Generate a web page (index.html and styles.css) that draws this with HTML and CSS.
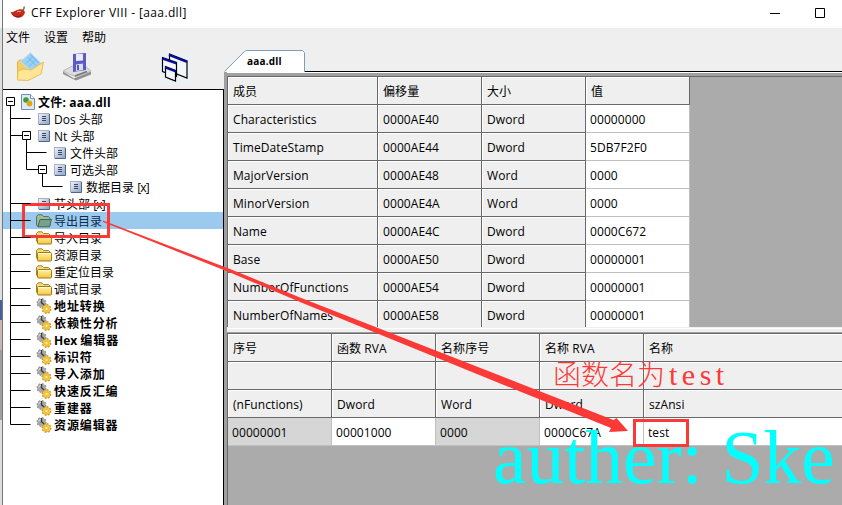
FILE: index.html
```html
<!DOCTYPE html>
<html lang="zh-CN">
<head>
<meta charset="utf-8">
<title>CFF Explorer VIII - [aaa.dll]</title>
<link rel="stylesheet" href="styles.css">
</head>
<body>
<svg class="defs" width="0" height="0" aria-hidden="true">
  <defs>
    <linearGradient id="gDoc" x1="0" y1="0" x2="1" y2="1"><stop offset="0" stop-color="#f4f7fb"/><stop offset="1" stop-color="#8fa3c0"/></linearGradient>
    <linearGradient id="gFold" x1="0" y1="0" x2="0" y2="1"><stop offset="0" stop-color="#fff3a8"/><stop offset="1" stop-color="#f3c63c"/></linearGradient>
    <symbol id="doc" viewBox="0 0 12 12"><rect x=".5" y=".5" width="10.5" height="10.5" fill="url(#gDoc)" stroke="#a3b0c6"/><path d="M11.5 1v10.5H1" fill="none" stroke="#52658c"/><path d="M4 3.500h4M4 5.500h4M4 7.500h4" stroke="#35496f"/></symbol>
    <symbol id="folder" viewBox="0 0 16 14"><path d="M.5 10.500V2.500L2 .8h4l1.500 1.700H12.500L14 4v1.500" fill="#f6dc7c" stroke="#a98322"/><rect x="1.500" y="4.500" width="14" height="8.500" rx="1" fill="url(#gFold)" stroke="#a07a1c"/><path d="M2.500 5.500h12" stroke="#fffbd0"/></symbol>
    <symbol id="folder-open" viewBox="0 0 16 14"><path d="M.5 11V2.500L2 .8h4l1.500 1.700H12.500L14 4v8H1.500z" fill="#9dbba0" stroke="#55755a"/><path d="M4 5.500h11.500L13.500 12.800H1.800z" fill="#76a18e" stroke="#47664c"/></symbol>
    <symbol id="gears" viewBox="0 0 16 16"><circle cx="5.500" cy="5" r="4" fill="#999" stroke="#8a8a8a" stroke-width="2" stroke-dasharray="1.600 1.500"/><circle cx="5.500" cy="5" r="4" fill="#a8a8a8"/><path d="M2.500 4L5 2" stroke="#eee"/><path d="M5.500 1v4.500M6 5l4 4" stroke="#3a3a3a" stroke-width="1.300"/><circle cx="10.500" cy="11" r="3.900" fill="#e8b52b" stroke="#c08c18" stroke-width="2" stroke-dasharray="1.600 1.400"/><circle cx="10.500" cy="11" r="3.800" fill="#f0c341"/><circle cx="10.500" cy="11" r="1" fill="#fff6d0"/></symbol>
  </defs>
</svg>
<div class="screen">
  <div class="behind"></div>
  <div class="window">
    <header class="titlebar">
      <svg class="chili" width="16" height="14" viewBox="0 0 16 14"><path d="M.5 5.500C2 7 4 5.500 6 4.500S11 2.500 13.500 4s1.500 5-2 7S2 11 .5 5.500z" fill="#c52a1b"/><path d="M2.500 8.500c2 2.500 6 3 9 1" stroke="#8a1710" fill="none"/><path d="M7 6c1-1 3-1 4 0" stroke="#f4a598" fill="none"/><path d="M12.500 4c1.500-.5 2-1.500 1.500-3.500" stroke="#56733a" fill="none" stroke-width="1.300"/></svg>
      <span class="title">CFF Explorer VIII - [aaa.dll]</span>
      <svg class="winbtns" width="60" height="12" viewBox="0 0 60 12"><path d="M0 6.500h10M45.500 1.500h9v9h-9z" fill="none" stroke="#000"/></svg>
    </header>
    <div class="main">
      <aside class="left">
        <nav class="menu"><span>文件</span><span>设置</span><span>帮助</span></nav>
        <div class="toolbar">
          <svg width="30" height="30" viewBox="0 0 30 30"><path d="M2.500 27V10l2-2h5l2 3 14 1v8L9 28z" fill="#f6cf63" stroke="#e6b44a"/><path d="M15.500 .5L26 11l-9 9L5.500 9.500z" fill="#9bd1f5" stroke="#c4e2f6"/><path d="M15.500 3l8 8M13 5.500l8 8M18 4.500l-7 7M21 7.500l-7 7" fill="none" stroke="#69b6ec"/><path d="M2.500 28l.5-9 5-2 8 1 12.500-8-2.500 12-13 6.500z" fill="#ffe596" stroke="#ecbd52"/></svg>
          <svg width="30" height="30" viewBox="0 0 30 30"><path d="M1 19.500l11 7 17-7v3l-15 6L1 22z" fill="#8f8f8f"/><path d="M1 19l9-5h13l6 5-15 6z" fill="#ddd" stroke="#b9b9b9"/><path d="M13 24l12-4.500" stroke="#777" stroke-width="1.500"/><path d="M11 2l13-1v17l-13 2z" fill="#5d5bc0"/><path d="M14 2h7v6.500l-7 .5z" fill="#e9ebf9"/><path d="M14 12.500l7-1v6.500l-7 1z" fill="#d9ddf2"/><path d="M15 13h2v5h-2z" fill="#5957bb"/></svg>
          <svg class="cascade" width="32" height="32" viewBox="0 0 32 32"><path d="M0 0h32v32H0z" fill="#ecf1f6"/><g fill="#f4f7fa" stroke="#000" stroke-width="1.200"><path d="M10.500 2l17.500 7v17l-17.500-7z"/><path d="M3.500 5.500l14 5v14l-14-5z"/><path d="M6.500 14.500l10 4v10.500l-10-4z"/></g><path d="M10 3l18 7M3 6.500l14.500 5M6 15.500l11 4" stroke="#0a0aa5" stroke-width="2"/></svg>
        </div>
        <div class="tree">
          <svg class="lines" width="70" height="340" viewBox="0 0 70 340"><g fill="none" stroke="#000"><path d="M7.500 16V334.500M7.500 28.500h20M7.500 45.500h12M7.500 113.500h20M7.500 130.500h20M7.500 147.500h20M7.500 164.500h20M7.500 181.500h20M7.500 198.500h20M7.500 215.500h20M7.500 232.500h20M7.500 249.500h20M7.500 266.500h20M7.500 283.500h20M7.500 300.500h20M7.500 317.500h20M7.500 334.500h20M23.500 50v29.500h12M23.500 62.500h20M39.500 84v12.500h20"/></g><g fill="#fff" stroke="#000"><path d="M3.500 7.500h8v8h-8zM19.500 41.500h8v8h-8zM35.500 75.500h8v8h-8z"/><path d="M5 11.500h5M21 45.500h5M37 79.500h5"/></g></svg>
          <div class="node root b"><svg width="14" height="16" viewBox="0 0 14 16"><path d="M.5.500h9l4 4v11H.5z" fill="#dce9f8" stroke="#6f8fb5"/><path d="M9.500.500v4h4" fill="#fff" stroke="#6f8fb5"/><circle cx="5" cy="6" r="2.800" fill="#3f9b3a"/><circle cx="8.500" cy="9.500" r="2.900" fill="#dea71c"/></svg><span>文件: <i>aaa.dll</i></span></div>
          <div class="node d1"><svg class="doc"><use href="#doc"/></svg><span>Dos 头部</span></div>
          <div class="node d1"><svg class="doc"><use href="#doc"/></svg><span>Nt 头部</span></div>
          <div class="node d2"><svg class="doc"><use href="#doc"/></svg><span>文件头部</span></div>
          <div class="node d2"><svg class="doc"><use href="#doc"/></svg><span>可选头部</span></div>
          <div class="node d3"><svg class="doc"><use href="#doc"/></svg><span>数据目录 <i class="x">[x]</i></span></div>
          <div class="node d1"><svg class="doc"><use href="#doc"/></svg><span>节头部 <i class="x">[x]</i></span></div>
          <div class="node f sel"><svg class="fold"><use href="#folder-open"/></svg><span>导出目录</span></div>
          <div class="node f"><svg class="fold"><use href="#folder"/></svg><span>导入目录</span></div>
          <div class="node f"><svg class="fold"><use href="#folder"/></svg><span>资源目录</span></div>
          <div class="node f"><svg class="fold"><use href="#folder"/></svg><span>重定位目录</span></div>
          <div class="node f"><svg class="fold"><use href="#folder"/></svg><span>调试目录</span></div>
          <div class="node f b"><svg class="gear"><use href="#gears"/></svg><span>地址转换</span></div>
          <div class="node f b"><svg class="gear"><use href="#gears"/></svg><span>依赖性分析</span></div>
          <div class="node f b"><svg class="gear"><use href="#gears"/></svg><span><i class="hex">Hex </i>编辑器</span></div>
          <div class="node f b"><svg class="gear"><use href="#gears"/></svg><span>标识符</span></div>
          <div class="node f b"><svg class="gear"><use href="#gears"/></svg><span>导入添加</span></div>
          <div class="node f b"><svg class="gear"><use href="#gears"/></svg><span>快速反汇编</span></div>
          <div class="node f b"><svg class="gear"><use href="#gears"/></svg><span>重建器</span></div>
          <div class="node f b"><svg class="gear"><use href="#gears"/></svg><span>资源编辑器</span></div>
        </div>
      </aside>
      <section class="right">
        <div class="tabs"><div class="tab"><svg class="tabshape" width="82" height="22" viewBox="0 0 82 22"><path d="M.5 21.500L20.500 1.500q1-1 2-1H78.500l2 2V22" fill="#fff" stroke="#7f9db9"/></svg><span>aaa.dll</span></div><div class="tabline"></div></div>
        <div class="panes">
          <div class="grid top">
            <div>成员</div><div>偏移量</div><div>大小</div><div>值</div>
            <div>Characteristics</div><div>0000AE40</div><div>Dword</div><div class="v">00000000</div>
            <div>TimeDateStamp</div><div>0000AE44</div><div>Dword</div><div class="v">5DB7F2F0</div>
            <div>MajorVersion</div><div>0000AE48</div><div>Word</div><div class="v">0000</div>
            <div>MinorVersion</div><div>0000AE4A</div><div>Word</div><div class="v">0000</div>
            <div>Name</div><div>0000AE4C</div><div>Dword</div><div class="v">0000C672</div>
            <div>Base</div><div>0000AE50</div><div>Dword</div><div class="v">00000001</div>
            <div>NumberOfFunctions</div><div>0000AE54</div><div>Dword</div><div class="v">00000001</div>
            <div>NumberOfNames</div><div>0000AE58</div><div>Dword</div><div class="v">00000001</div>
          </div>
          <div class="splitter"></div>
          <div class="grid bottom">
            <div>序号</div><div>函数 RVA</div><div>名称序号</div><div>名称 RVA</div><div>名称</div>
            <div></div><div></div><div></div><div></div><div></div>
            <div>(nFunctions)</div><div>Dword</div><div>Word</div><div>Dword</div><div>szAnsi</div>
            <div class="v g">00000001</div><div class="v">00001000</div><div class="v g">0000</div><div class="v">0000C67A</div><div class="v">test</div>
          </div>
        </div>
      </section>
    </div>
  </div>
  <svg class="marks" width="842" height="505" viewBox="0 0 842 505">
    <g fill="none" stroke="#fb3a37" stroke-width="3"><path d="M23.500 204.500h85v32h-85z"/><path d="M634.500 420.500h53v25h-53z"/></g>
    <path d="M103 220.500L230 269 300 297.500 520 383.500 613.500 420 616.500 418 628 431 609 432 611 428 520 391.500 300 302 230 272.500 103 222z" fill="#fb3a37"/>
  </svg>
  <div class="note">函数名为<span>test</span></div>
  <div class="author">auther: Ske</div>
</div>
</body>
</html>
```
FILE: styles.css
```css
* { box-sizing: border-box; }
body { margin: 0; font: 12px/16px "Open Sans", "Noto Sans CJK SC", sans-serif; color: #000; }
.defs { position: absolute; }
.screen { position: relative; width: 842px; height: 505px; overflow: hidden; display: flex; background: #efefef; }
.behind { width: 2px; background: linear-gradient(#f4f4f4 0 28px, #dedede 28px 300px, #46629a 300px 320px, #c9b5b5 320px 350px, #a0a0a0 350px 420px, #ddd 420px); }
.window { flex: 1; min-width: 0; display: flex; flex-direction: column; border-left: 1px solid #777; }
.titlebar { height: 28px; background: #fff; display: flex; align-items: center; padding: 0 12px 3px 7px; }
.title { margin-left: 5px; flex: 1; letter-spacing: .37px; }
.main { flex: 1; min-height: 0; display: flex; }
.left { width: 221px; display: flex; flex-direction: column; flex: none; }
.menu { height: 20px; display: flex; gap: 14px; padding: 2px 3px; }
.toolbar { height: 41px; display: flex; gap: 17px; padding: 4px 0 0 12px; flex: none; }
.cascade { margin-left: 50px; }
.tree { position: relative; flex: 1; border: solid #000; border-width: 1px 1px 0 0; padding-top: 3px; background: #fff; }
.lines { position: absolute; left: 0; top: 0; z-index: 1; }
.node { height: 17px; display: flex; align-items: center; white-space: nowrap; line-height: 17px; }
.node svg { flex: none; }
.node span { position: relative; top: 1px; }
.node i { font-style: normal; }
.b { font-weight: 700; letter-spacing: .9px; }
.root { padding-left: 18px; gap: 3px; letter-spacing: .2px; }
.x { letter-spacing: -.8px; }
.hex { letter-spacing: 0; }
.d1 { padding-left: 35px; gap: 4px; }
.d2 { padding-left: 51px; gap: 4px; }
.d3 { padding-left: 67px; gap: 4px; }
.f { padding-left: 33px; gap: 2px; }
.sel { background: #9ccaef; color: #0c2d4a; }
.doc { width: 12px; height: 12px; }
.fold { width: 16px; height: 14px; }
.gear { width: 16px; height: 16px; }
.right { flex: 1; min-width: 0; display: flex; flex-direction: column; }
.tabs { height: 44px; display: flex; align-items: flex-end; flex: none; }
.tab { position: relative; width: 81px; height: 22px; flex: none; font-size: 10px; font-weight: 700; line-height: 22px; padding-left: 23px; letter-spacing: .2px; }
.tabshape { position: absolute; left: 0; top: 0; }
.tab span { position: relative; }
.tabline { flex: 1; height: 1px; background: #000; }
.panes { flex: 1; min-height: 0; display: flex; flex-direction: column; border-left: 3px solid #a0a0a0; padding-top: 4px; background: linear-gradient(#fff 0 1px, #a0a0a0 1px 4px, #ababab 4px); }
.grid { display: grid; grid-auto-rows: 28px; border: solid #696969; border-width: 1px 0 0 1px; overflow: hidden; background: #ababab; font-size: 12px; letter-spacing: .08px; }
.top { height: 251px; flex: none; grid-template-columns: 150px 104px 104px 104px; }
.bottom { flex: 1; grid-template-columns: 104px 104px 104px 104px 1fr; align-content: start; }
.grid > div { padding: 7px 0 0 5px; background: #efefef; border: solid #696969; border-width: 0 1px 1px 0; box-shadow: inset 1px 1px #fff; white-space: nowrap; }
.grid > .v { background: #fff; border-color: #c0c0c0; padding-left: 4px; }
.grid > .g { background: #d6d6d6; box-shadow: none; }
.bottom > div:nth-child(5n) { border-right: 0; }
.splitter { height: 6px; flex: none; background: linear-gradient(#efefef 0 1px, #fff 1px 2px, #efefef 2px 5px, #a0a0a0 5px); }
.marks { position: absolute; left: 0; top: 0; }
.note { position: absolute; left: 553px; top: 355px; font: 300 28px/36px "Noto Sans CJK SC", sans-serif; color: #fb3a37; white-space: nowrap; }
.note span { font: 30px/36px "Liberation Serif", serif; letter-spacing: 4.500px; margin-left: 4px; }
.author { position: absolute; left: 493px; top: 412px; font: 75.500px/92px "Liberation Serif", serif; color: #0ff; white-space: nowrap; }
```
